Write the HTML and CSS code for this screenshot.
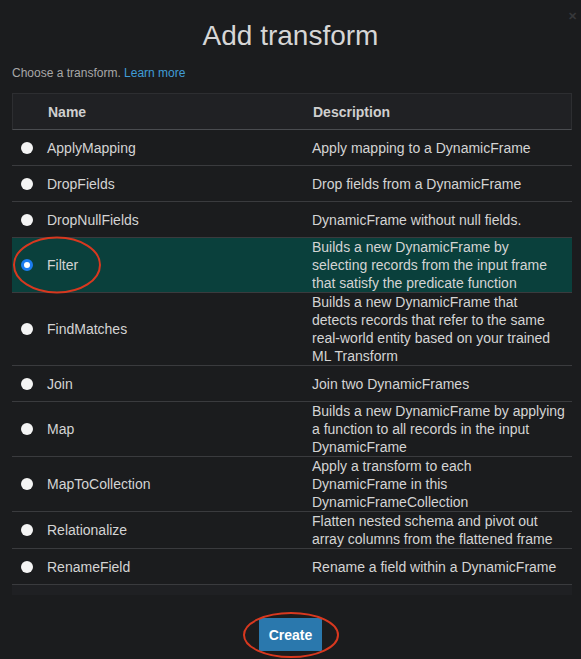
FILE: index.html
```html
<!DOCTYPE html>
<html>
<head>
<meta charset="utf-8">
<link rel="stylesheet" href="styles.css">
</head>
<body>
<div class="modal">
  <span class="close">&#x2715;</span>
  <h1 class="title">Add transform</h1>
  <p class="intro">Choose a transform. <a class="link" href="#">Learn more</a></p>
  <div class="table">
    <div class="row head">
      <div class="cell sel"></div>
      <div class="cell name">Name</div>
      <div class="cell desc">Description</div>
    </div>
    <div class="row"><div class="cell sel"><span class="radio"></span></div><div class="cell name">ApplyMapping</div><div class="cell desc">Apply mapping to a DynamicFrame</div></div>
    <div class="row"><div class="cell sel"><span class="radio"></span></div><div class="cell name">DropFields</div><div class="cell desc">Drop fields from a DynamicFrame</div></div>
    <div class="row"><div class="cell sel"><span class="radio"></span></div><div class="cell name">DropNullFields</div><div class="cell desc">DynamicFrame without null fields.</div></div>
    <div class="row selected"><div class="cell sel"><span class="radio on"></span></div><div class="cell name">Filter</div><div class="cell desc">Builds a new DynamicFrame by<br>selecting records from the input frame<br>that satisfy the predicate function</div></div>
    <div class="row"><div class="cell sel"><span class="radio"></span></div><div class="cell name">FindMatches</div><div class="cell desc">Builds a new DynamicFrame that<br>detects records that refer to the same<br>real-world entity based on your trained<br>ML Transform</div></div>
    <div class="row"><div class="cell sel"><span class="radio"></span></div><div class="cell name">Join</div><div class="cell desc">Join two DynamicFrames</div></div>
    <div class="row"><div class="cell sel"><span class="radio"></span></div><div class="cell name">Map</div><div class="cell desc">Builds a new DynamicFrame by applying<br>a function to all records in the input<br>DynamicFrame</div></div>
    <div class="row"><div class="cell sel"><span class="radio"></span></div><div class="cell name">MapToCollection</div><div class="cell desc">Apply a transform to each<br>DynamicFrame in this<br>DynamicFrameCollection</div></div>
    <div class="row"><div class="cell sel"><span class="radio"></span></div><div class="cell name">Relationalize</div><div class="cell desc">Flatten nested schema and pivot out<br>array columns from the flattened frame</div></div>
    <div class="row"><div class="cell sel"><span class="radio"></span></div><div class="cell name">RenameField</div><div class="cell desc">Rename a field within a DynamicFrame</div></div>
    <div class="foot"></div>
  </div>
  <div class="actions">
    <button class="btn">Create</button>
  </div>
  <svg class="mark mark-filter" width="90" height="60" viewBox="0 0 90 60"><ellipse cx="45" cy="30" rx="43" ry="27.5" fill="none" stroke="#d8381f" stroke-width="2"/></svg>
  <svg class="mark mark-create" width="98" height="48" viewBox="0 0 98 48"><ellipse cx="49" cy="24" rx="47" ry="22" fill="none" stroke="#d8381f" stroke-width="2"/></svg>
</div>
</body>
</html>
```

FILE: styles.css
```css
html, body {
  margin: 0;
  padding: 0;
  background: #1b1c1e;
}
body {
  font-family: "Liberation Sans", Arial, sans-serif;
  color: #d4d4d4;
}
.modal {
  position: relative;
  width: 581px;
  height: 659px;
  padding: 20px 9px 0 12px;
  box-sizing: border-box;
}
.close {
  position: absolute;
  top: 10px;
  right: 4px;
  font-size: 11px;
  line-height: 12px;
  color: #36373a;
  font-weight: bold;
}
.title {
  margin: 0 -9px 0 -12px;
  text-align: center;
  font-size: 28px;
  line-height: 32px;
  font-weight: normal;
  color: #d6d6d6;
}
.intro {
  margin: 13px 0 12px;
  font-size: 12px;
  line-height: 16px;
  color: #a8a8a8;
}
.link {
  color: #409cd6;
  text-decoration: none;
}
.table {
  width: 560px;
}
.row {
  display: grid;
  grid-template-columns: 28px 265px 1fr;
  min-height: 35px;
  border-bottom: 1px solid #3a3b3e;
  align-items: center;
  font-size: 14px;
  line-height: 18px;
}
.row.head {
  min-height: 35px;
  background: #202124;
  border: 1px solid #2d2e31;
  border-bottom: 1px solid #4a4c50;
  font-weight: bold;
  color: #cfcfcf;
}
.row.selected {
  background: #0a403c;
}
.cell {
  padding: 0 7px;
  white-space: nowrap;
}
.cell.sel {
  padding: 0 0 0 9px;
  display: flex;
  align-items: center;
}
.radio {
  display: block;
  width: 12px;
  height: 12px;
  border-radius: 50%;
  background: #f4f4f4;
  box-sizing: border-box;
}
.radio.on {
  border: 3px solid #1b7cf0;
  background: #ffffff;
}
.foot {
  height: 10px;
  background: #1f2023;
}
.actions {
  display: flex;
  justify-content: center;
  margin: 23px -9px 0 -12px;
}
.btn {
  background: #2a78ad;
  color: #ffffff;
  border: none;
  font-family: "Liberation Sans", Arial, sans-serif;
  font-weight: bold;
  font-size: 14px;
  height: 33px;
  padding: 0 10px;
  border-radius: 1px;
}
.mark {
  position: absolute;
}
.mark-filter {
  left: 12px;
  top: 235px;
}
.mark-create {
  left: 242px;
  top: 611px;
}
```
